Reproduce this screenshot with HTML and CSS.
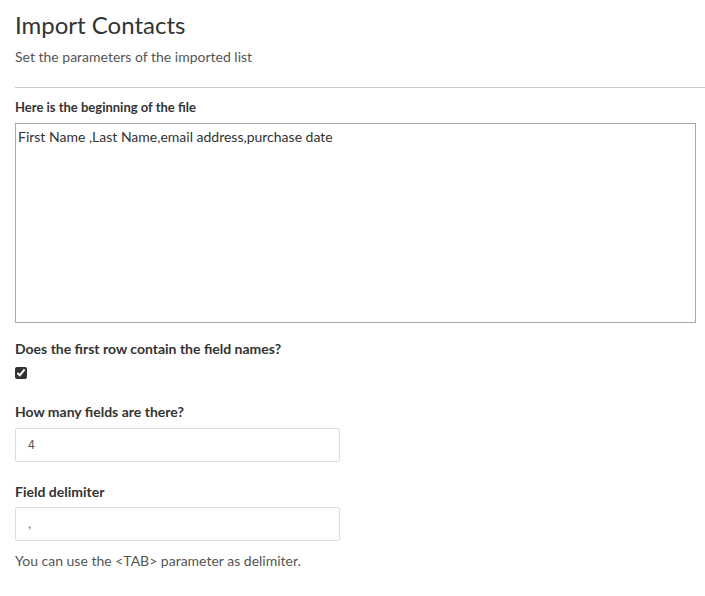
FILE: index.html
```
<!DOCTYPE html>
<html>
<head>
<meta charset="utf-8">
<link rel="stylesheet" href="styles.css">
</head>
<body>
<div class="page">
  <h1 class="title">Import Contacts</h1>
  <p class="subtitle">Set the parameters of the imported list</p>
  <hr class="sep">
  <div class="field first">
    <label class="label small">Here is the beginning of the file</label>
    <textarea class="preview">First Name ,Last Name,email address,purchase date</textarea>
  </div>
  <div class="field header-row">
    <label class="label">Does the first row contain the field names?</label>
    <input type="checkbox" class="check" checked>
  </div>
  <div class="field count">
    <label class="label">How many fields are there?</label>
    <input type="text" class="input" value="4">
  </div>
  <div class="field delim">
    <label class="label">Field delimiter</label>
    <input type="text" class="input" value=",">
    <p class="help">You can use the &lt;TAB&gt; parameter as delimiter.</p>
  </div>
</div>
</body>
</html>
```
FILE: styles.css
```
html, body {
  margin: 0;
  padding: 0;
  background: #fff;
}
body {
  font-family: Lato, "Open Sans", sans-serif;
  font-size: 14px;
  color: #333;
}
.page {
  padding: 10px 0 0 15px;
}
.title {
  margin: 0;
  font-size: 24px;
  font-weight: 400;
  line-height: 30px;
  color: #333;
}
.subtitle {
  margin: 7px 0 0;
  font-size: 14px;
  line-height: 20px;
  color: #555;
}
.sep {
  margin: 20px 0 0;
  border: 0;
  border-top: 1px solid #ccc;
  height: 0;
}
.field {
  display: flex;
  flex-direction: column;
  align-items: flex-start;
}
.field.first { margin-top: 10px; }
.field.header-row { margin-top: 16px; }
.field.count { margin-top: 23px; }
.field.delim { margin-top: 20px; }
.label {
  font-weight: 700;
  font-size: 14px;
  line-height: 20px;
  color: #333;
  margin-bottom: 6px;
}
.label.small {
  font-size: 13px;
  line-height: 18px;
  margin-bottom: 7px;
}
.header-row .label { margin-bottom: 8px; }
.delim .label { margin-bottom: 5px; }
.preview {
  box-sizing: border-box;
  width: 681px;
  height: 200px;
  margin: 0;
  padding: 4px 2px;
  border: 1px solid #a9a9a9;
  font-family: Lato, sans-serif;
  font-size: 14px;
  line-height: 17px;
  color: #333;
  resize: none;
}
.check {
  margin: 0;
  width: 12px;
  height: 12px;
  accent-color: #333;
}
.input {
  box-sizing: border-box;
  width: 325px;
  height: 34px;
  margin: 0;
  padding: 0 12px;
  border: 1px solid #ddd;
  border-radius: 2px;
  font-family: "Liberation Sans", Arial, sans-serif;
  font-size: 12px;
  color: #555;
}
.help {
  margin: 10px 0 0;
  font-size: 14px;
  line-height: 20px;
  color: #555;
}
```
